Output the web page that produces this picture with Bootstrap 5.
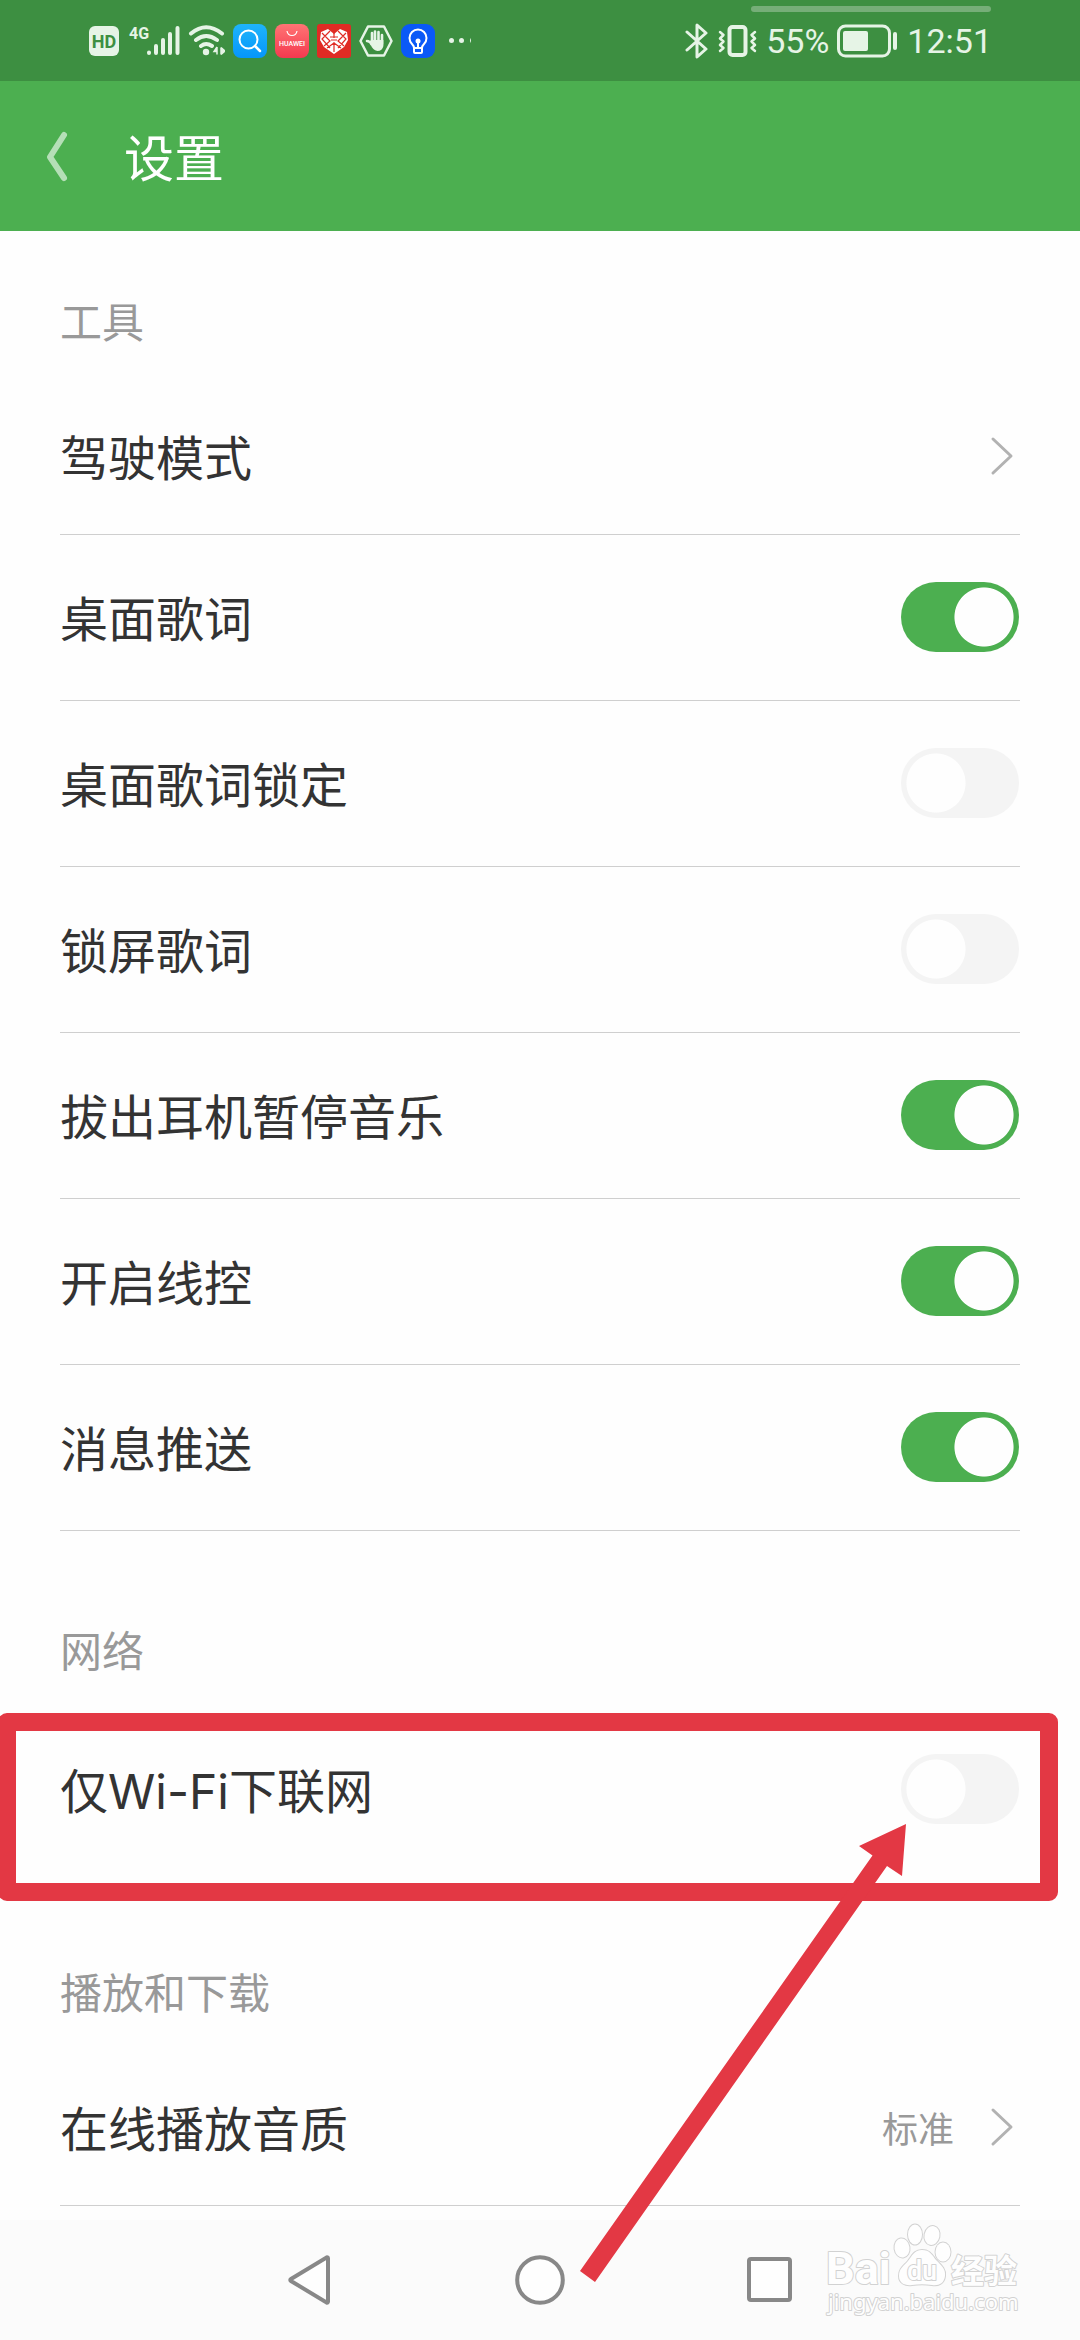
<!DOCTYPE html>
<html lang="zh-CN">
<head>
<meta charset="utf-8">
<meta name="viewport" content="width=device-width, initial-scale=1">
<title>设置</title>
<link href="https://cdn.jsdelivr.net/npm/bootstrap@5.3.0/dist/css/bootstrap.min.css" rel="stylesheet">
<style>
  :root { --brand: #4caf50; --brand-dark: #3d8f41; --ink: #333; --muted: #999; --rule: #cfcfcf; --alert: #e33844; }
  body { background: #fefefe; color: var(--ink); font-family: Inter, "Noto Sans CJK SC", sans-serif; overflow-x: hidden; }
  svg { display: block; flex: none; }

  .status-bar { background: var(--brand-dark); height: 81px; padding: 0 88px; color: #e6f4e6; font: 34px/40px Roboto, sans-serif; }
  .status-group { gap: 8px; }
  .status-handle { top: 6px; right: 89px; width: 240px; height: 6px; border-radius: 3px; background: #76ae78; }

  .title-bar { background: var(--brand); height: 150px; padding: 0 44px; gap: 52px; }
  .title-bar h1 { font-size: 50px; line-height: 60px; font-weight: 400; color: #fff; padding-top: 6px; }

  .settings-list { padding: 0 60px; }
  .settings-list section + section { margin-top: 29px; }
  .group-title { font-size: 42px; line-height: 60px; font-weight: 400; color: var(--muted); padding: 62px 0 25px; margin: 0; }
  .setting { height: 166px; padding: 0 1px 2px 0; font-size: 48px; line-height: 60px; border-bottom: 1px solid var(--rule); }
  .setting-link { height: 157px; padding: 0 6px 0 0; color: inherit; text-decoration: none; }
  .setting label, .setting span { padding-top: 6px; }
  .setting-last { border-bottom-color: transparent; }
  .setting-value { font-size: 36px; color: var(--muted); margin-right: 36px; }

  .form-check-input.toggle {
    width: 118px; height: 70px; margin: 0; border: 0; border-radius: 35px; flex: none;
    background-color: #f4f4f4; background-repeat: no-repeat;
    background-image: radial-gradient(closest-side, #fefefe 97%, transparent);
    background-size: 60px 60px; background-position: left 5px center;
  }
  .form-check-input.toggle:checked { background-color: var(--brand); background-position: right 5px center; }

  .callout-frame { left: -62px; right: -38px; top: 6px; height: 188px; border: 18px solid var(--alert); border-radius: 9px; pointer-events: none; z-index: 2; }
  .callout-arrow { right: 113px; top: 116px; pointer-events: none; z-index: 3; }

  .system-nav { background: #fbfbfb; height: 120px; }
  .system-keys { width: 64%; }
  .system-keys button { background: none; border: 0; padding: 0; }
  .site-mark { right: 54px; top: 0; }
</style>
</head>
<body>
<div class="d-flex flex-column min-vh-100 position-relative">

  <div class="status-bar d-flex align-items-center justify-content-between position-relative">
    <div class="status-handle position-absolute"></div>
    <div class="status-group d-flex align-items-center">
      <svg width="31" height="34" viewBox="0 0 31 34"><rect x="1" y="2" width="30" height="30" rx="6" fill="#e6f4e6"/><text x="16" y="24" text-anchor="middle" font-family="Roboto" font-weight="700" font-size="18" fill="#3d8f41">HD</text></svg>
      <svg width="53" height="34" viewBox="0 0 53 34"><text x="2" y="15" font-family="Roboto" font-weight="700" font-size="16" fill="#e6f4e6">4G</text><g stroke="#e6f4e6" stroke-width="4" stroke-linecap="round"><path d="M22 28.500V29M29 22v7M36 16v13M43 10v19M50.500 4v25"/></g></svg>
      <svg width="37" height="34" viewBox="0 0 37 34"><g fill="none" stroke="#e6f4e6" stroke-width="4" stroke-linecap="round"><path d="M3 9.500Q18 -3 34 9.500M8 16q10-8 21 0M13 22q5-4 11 0"/></g><circle cx="18" cy="28" r="3.200" fill="#e6f4e6"/><path d="M29 23v7.500M29 23l-3 4.500h3M33 23.500v7M33 23.500l4 3.500-4 3.500" fill="#e6f4e6" stroke="#e6f4e6" stroke-width="1.500"/></svg>
      <svg width="34" height="34" viewBox="0 0 34 34"><defs><linearGradient id="sky" x2="0" y2="1"><stop stop-color="#1fb4fa"/><stop offset="1" stop-color="#0596fb"/></linearGradient></defs><rect width="34" height="34" rx="8" fill="url(#sky)"/><circle cx="15.500" cy="15.500" r="9" fill="none" stroke="#fff" stroke-width="2"/><path d="m22 22 5 5" stroke="#fff" stroke-width="2.500" stroke-linecap="round"/></svg>
      <svg width="34" height="34" viewBox="0 0 34 34"><defs><linearGradient id="rose" x2="0" y2="1"><stop stop-color="#ff7474"/><stop offset="1" stop-color="#f5394f"/></linearGradient></defs><rect width="34" height="34" rx="8" fill="url(#rose)"/><path d="M12 7c1 6 9 6 10 0" fill="none" stroke="#fff" stroke-width="1.200"/><text x="17" y="22" text-anchor="middle" font-family="Roboto" font-weight="500" font-size="7" fill="#fff">HUAWEI</text></svg>
      <svg width="34" height="34" viewBox="0 0 34 34"><rect width="34" height="34" rx="3" fill="#e02b24"/><path d="M4 8 11 5 17 10 23 5 30 8 31 16 27 23 17 30 7 23 3 16z" fill="#fff"/><g stroke="#e02b24" stroke-width="1.200" fill="none"><path d="m5 9 8 8-6 5M13 7l-8 8 8 9M29 9l-8 8 6 5M21 7l8 8-8 9M17 8v6M17 18v10M13 13h8M14 16h6M10 24l7-5 7 5"/></g></svg>
      <svg width="34" height="34" viewBox="0 0 34 34"><path d="M9 2.500h16L32.500 17 25 31.500H9L1.500 17z" fill="none" stroke="#e6f4e6" stroke-width="2.500" stroke-linejoin="round"/><path d="M8 17q3 0 5 4V9M16 20V7.500M19.500 20V8M23 20V11" fill="none" stroke="#e6f4e6" stroke-width="2.600" stroke-linecap="round"/><path d="M11.600 16h12.800v6q-1 5-6 5-5-1-7-7z" fill="#e6f4e6"/></svg>
      <svg width="34" height="34" viewBox="0 0 34 34"><rect width="34" height="34" rx="9" fill="#0a59f7"/><g fill="none" stroke="#fff" stroke-width="2"><path d="M13 24q0-2-2-4a8.500 8.500 0 1 1 12 0q-2 2-2 4zM13 24v4q0 1 1 1h6q1 0 1-1v-4M17 18v6"/></g><circle cx="17" cy="17" r="2.500" fill="#fff"/></svg>
      <svg width="30" height="34" viewBox="0 0 30 34"><g fill="#e6f4e6"><circle cx="8.500" cy="16.500" r="2.500"/><circle cx="18.500" cy="16.500" r="2.500"/><path d="M28 14v5q-2-2.500 0-5z"/></g></svg>
    </div>
    <div class="status-group d-flex align-items-center">
      <svg width="26" height="36" viewBox="0 0 26 36"><path d="m3 9 19 17-9 8V2l9 8L3 27" fill="none" stroke="#e6f4e6" stroke-width="3" stroke-linejoin="round" stroke-linecap="round"/></svg>
      <svg width="40" height="34" viewBox="0 0 40 34"><g fill="none" stroke="#e6f4e6" stroke-linecap="round" stroke-linejoin="round"><rect x="11.500" y="3" width="16" height="28" rx="3" stroke-width="4"/><path d="m2 8 3.500 3L2 14.500l3.500 3L2 21l3.500 3L2 27M37 8l-3.500 3 3.500 3.500-3.500 3L37 21l-3.500 3 3.500 3" stroke-width="2.500"/></g></svg>
      <span>55%</span>
      <svg width="62" height="34" viewBox="0 0 62 34"><rect x="1.500" y="2" width="51" height="30" rx="7" fill="none" stroke="#e6f4e6" stroke-width="3"/><rect x="6" y="7" width="25" height="20" rx="2" fill="#e6f4e6"/><path d="M58 10v14" stroke="#e6f4e6" stroke-width="4" stroke-linecap="round"/></svg>
      <span>12:51</span>
    </div>
  </div>

  <header class="title-bar d-flex align-items-center">
    <a href="#" aria-label="返回"><svg width="28" height="52" viewBox="0 0 28 52"><path d="M20 5 6 27l14 21" fill="none" stroke="#b5dfb7" stroke-width="6" stroke-linecap="round" stroke-linejoin="round"/></svg></a>
    <h1 class="m-0">设置</h1>
  </header>

  <main class="settings-list">
    <section>
      <h2 class="group-title">工具</h2>
      <a href="#" class="setting setting-link d-flex align-items-center justify-content-between">
        <span>驾驶模式</span>
        <svg width="24" height="40" viewBox="0 0 24 40"><path d="m3 3 18 17L3 37" fill="none" stroke="#b2b2b2" stroke-width="3" stroke-linecap="round" stroke-linejoin="round"/></svg>
      </a>
      <div class="setting d-flex align-items-center justify-content-between"><label for="desk">桌面歌词</label><input class="form-check-input toggle" type="checkbox" role="switch" id="desk" checked></div>
      <div class="setting d-flex align-items-center justify-content-between"><label for="desklock">桌面歌词锁定</label><input class="form-check-input toggle" type="checkbox" role="switch" id="desklock"></div>
      <div class="setting d-flex align-items-center justify-content-between"><label for="lockscreen">锁屏歌词</label><input class="form-check-input toggle" type="checkbox" role="switch" id="lockscreen"></div>
      <div class="setting d-flex align-items-center justify-content-between"><label for="unplug">拔出耳机暂停音乐</label><input class="form-check-input toggle" type="checkbox" role="switch" id="unplug" checked></div>
      <div class="setting d-flex align-items-center justify-content-between"><label for="wire">开启线控</label><input class="form-check-input toggle" type="checkbox" role="switch" id="wire" checked></div>
      <div class="setting d-flex align-items-center justify-content-between"><label for="push">消息推送</label><input class="form-check-input toggle" type="checkbox" role="switch" id="push" checked></div>
    </section>

    <section>
      <h2 class="group-title">网络</h2>
      <div class="setting setting-last d-flex align-items-center justify-content-between position-relative">
        <label for="wifi">仅Wi-Fi下联网</label><input class="form-check-input toggle" type="checkbox" role="switch" id="wifi">
        <div class="callout-frame position-absolute"></div>
        <svg class="callout-arrow position-absolute" width="328" height="460" viewBox="0 0 328 460"><path d="M327 1 280 23l13.500 9.500L1 448l15 11L308 43l15 10z" fill="#e33844"/></svg>
      </div>
    </section>

    <section>
      <h2 class="group-title">播放和下载</h2>
      <a href="#" class="setting setting-link d-flex align-items-center">
        <span class="me-auto">在线播放音质</span>
        <span class="setting-value">标准</span>
        <svg width="24" height="40" viewBox="0 0 24 40"><path d="m3 3 18 17L3 37" fill="none" stroke="#b2b2b2" stroke-width="3" stroke-linecap="round" stroke-linejoin="round"/></svg>
      </a>
    </section>
  </main>

  <nav class="system-nav mt-auto position-relative d-flex justify-content-center">
    <div class="system-keys d-flex">
      <button type="button" class="flex-fill d-flex align-items-center justify-content-center" aria-label="后退"><svg width="50" height="52" viewBox="0 0 50 52"><path d="M43 4.500v43q0 1.500-1.500 1L6 27q-1.500-1 0-2L41.500 3.500q1.500-.5 1.500 1z" fill="#fefefe" stroke="#888" stroke-width="4"/></svg></button>
      <button type="button" class="flex-fill d-flex align-items-center justify-content-center" aria-label="主页"><svg width="50" height="50" viewBox="0 0 50 50"><circle cx="25" cy="25" r="22.800" fill="#fefefe" stroke="#888" stroke-width="4"/></svg></button>
      <button type="button" class="flex-fill d-flex align-items-center justify-content-center" aria-label="最近任务"><svg width="50" height="50" viewBox="0 0 50 50"><rect x="4" y="4" width="41" height="41" rx="2" fill="#fefefe" stroke="#888" stroke-width="4"/></svg></button>
    </div>
    <svg class="site-mark position-absolute" width="202" height="104" viewBox="0 0 202 104">
      <g fill="#fefefe" stroke="#d2d2d2" stroke-width="2" paint-order="stroke" stroke-linejoin="round">
        <g stroke-width="2">
          <ellipse cx="78" cy="28" rx="7.500" ry="9.500" transform="rotate(-8 78 28)"/>
          <ellipse cx="91" cy="14.500" rx="7" ry="10"/>
          <ellipse cx="108" cy="15.500" rx="7.500" ry="9.500" transform="rotate(12 108 15.500)"/>
          <ellipse cx="119" cy="32" rx="7.500" ry="9.500"/>
          <path d="M98 30c8 0 10 5 14 10 5 5 10 9 9 16-1 8-7 10-13 9-7-1-13-1-20 0-7 1-13-2-13-9 0-8 5-10 9-15s6-11 14-11z"/>
        </g>
        <text x="2" y="64" font-family="Roboto" font-weight="700" font-size="45">Bai</text>
        <text x="98" y="60" text-anchor="middle" font-family="Roboto" font-weight="500" font-size="27">du</text>
        <text x="127" y="63" font-family="Noto Sans CJK SC" font-weight="700" font-size="33">经验</text>
        <text x="4" y="90" font-family="Noto Sans" font-size="22">jingyan.baidu.com</text>
      </g>
    </svg>
  </nav>
</div>
<script src="https://cdn.jsdelivr.net/npm/bootstrap@5.3.0/dist/js/bootstrap.bundle.min.js"></script>
</body>
</html>
